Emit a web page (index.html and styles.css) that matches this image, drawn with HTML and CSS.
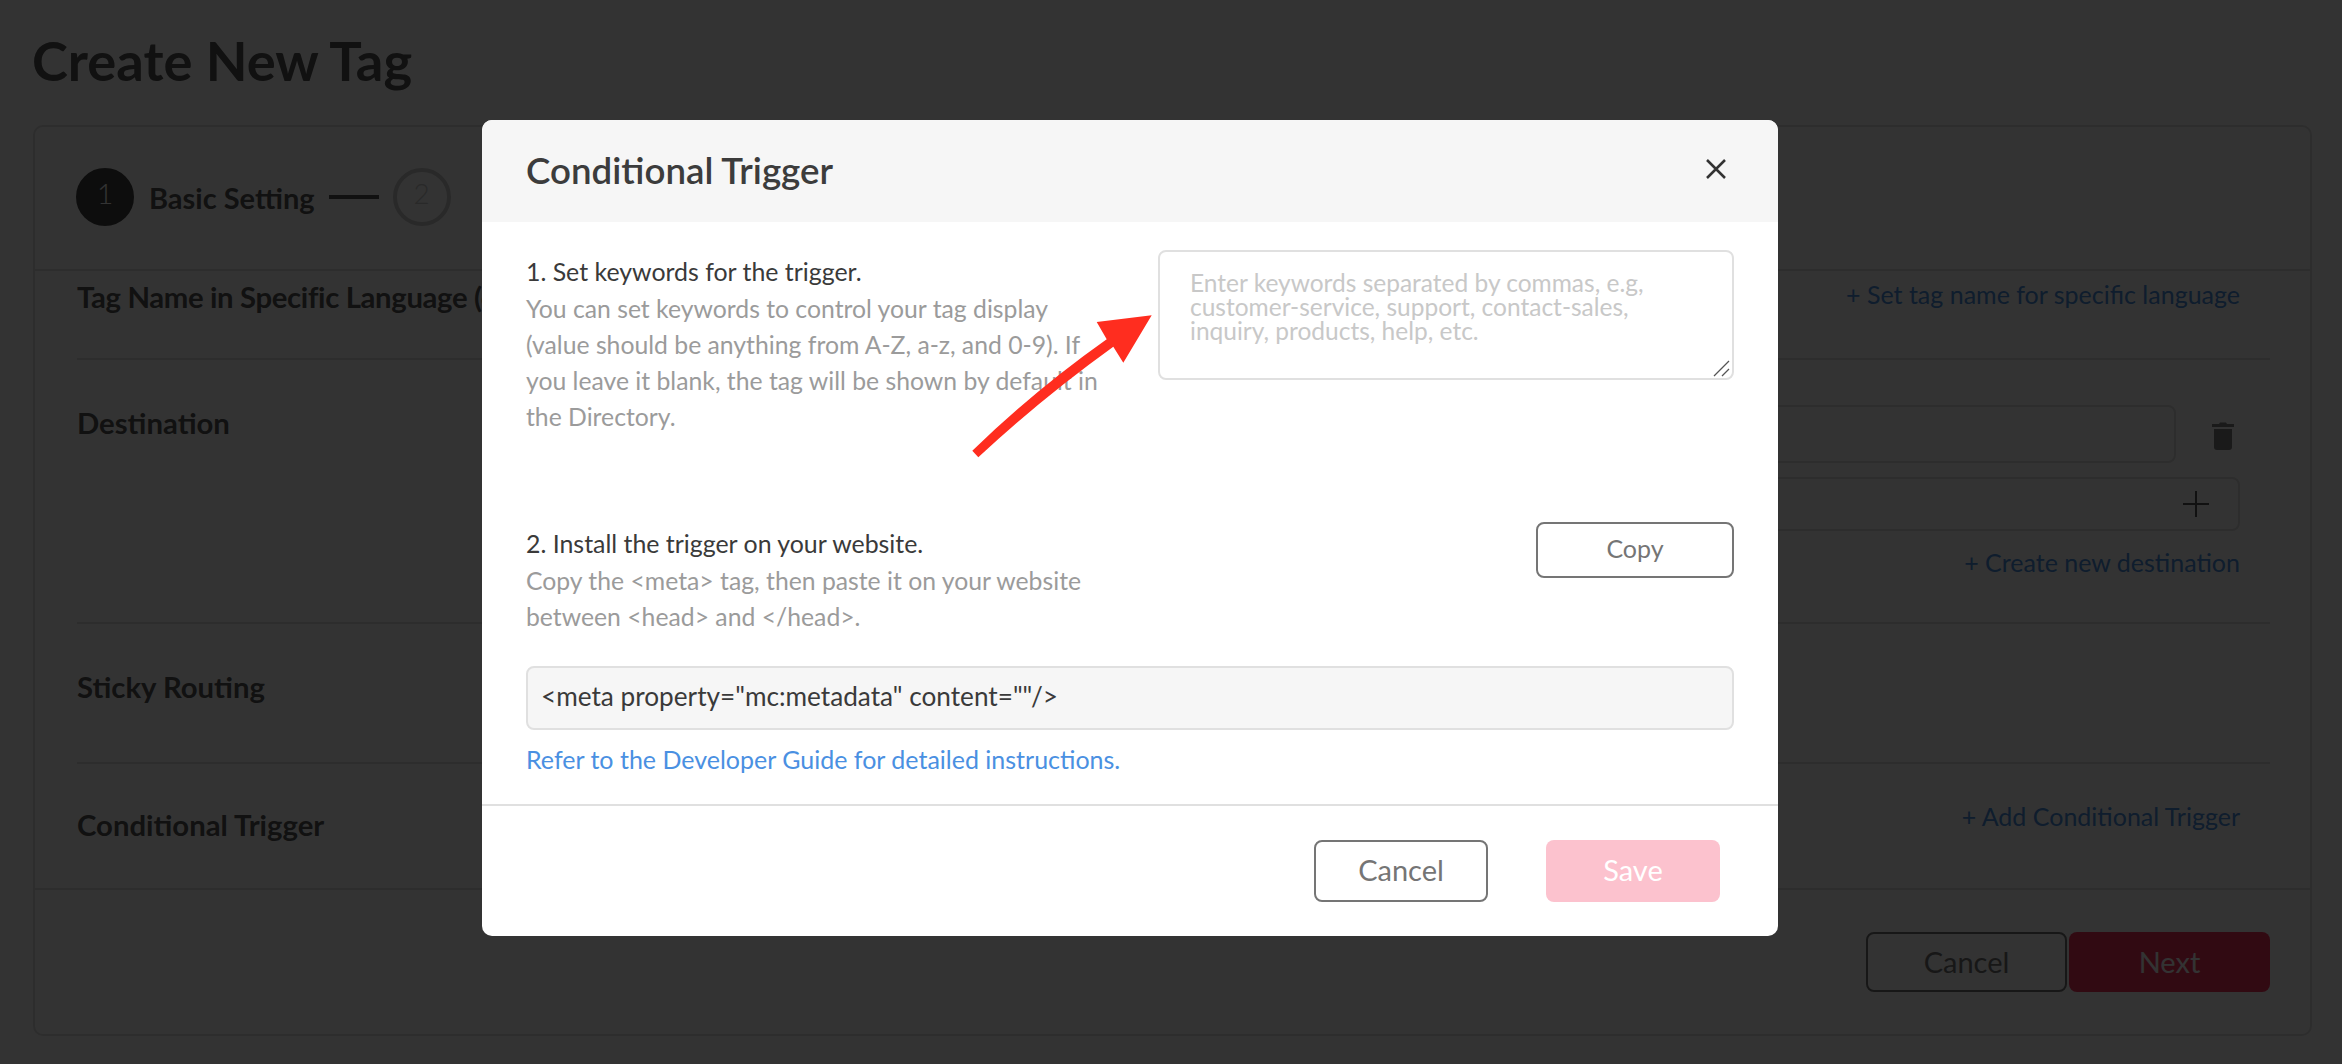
FILE: index.html
```html
<!DOCTYPE html>
<html lang="en">
<head>
    <meta charset="UTF-8">
    <title>Create New Tag</title>
    <link rel="stylesheet" href="styles.css">
</head>
<body>

<div class="page">
    <h1 class="page-title">Create New Tag</h1>

    <div class="card">
        <div class="stepper">
            <span class="step-num step-active">1</span>
            <span class="step-label">Basic Setting</span>
            <span class="step-line"></span>
            <span class="step-num">2</span>
        </div>

        <div class="rows">
            <div class="row row-lang">
                <span class="row-label">Tag Name in Specific Language (optional)</span>
                <a href="#" class="row-link">+ Set tag name for specific language</a>
            </div>

            <div class="row row-dest">
                <span class="row-label">Destination</span>
                <div class="dest-fields">
                    <div class="dest-line">
                        <div class="dest-input"></div>
                        <svg class="trash" viewBox="0 0 22 28" width="22" height="28">
                            <path d="M7 2 L8 0.5 H14 L15 2 H22 V5 H0 V2 Z M2 7 H20 V25 Q20 28 17 28 H5 Q2 28 2 25 Z"/>
                        </svg>
                    </div>
                    <div class="dest-select">
                        <svg class="plus" viewBox="0 0 26 26" width="26" height="26">
                            <path d="M13 0 V26 M0 13 H26"/>
                        </svg>
                    </div>
                    <a href="#" class="row-link dest-link">+ Create new destination</a>
                </div>
            </div>

            <div class="row row-sticky">
                <span class="row-label">Sticky Routing</span>
            </div>

            <div class="row row-trigger">
                <span class="row-label">Conditional Trigger</span>
                <a href="#" class="row-link">+ Add Conditional Trigger</a>
            </div>
        </div>

        <div class="card-footer">
            <button class="btn btn-outline btn-wide">Cancel</button>
            <button class="btn btn-next btn-wide">Next</button>
        </div>
    </div>
</div>

<div class="overlay">
    <div class="modal">
        <div class="modal-head">
            <h2>Conditional Trigger</h2>
            <svg class="close" viewBox="0 0 20 20" width="20" height="20">
                <path d="M1 1 L19 19 M19 1 L1 19"/>
            </svg>
        </div>

        <div class="modal-body">
            <div class="trigger-step step-keywords">
                <div class="step-text">
                    <p class="step-title">1. Set keywords for the trigger.</p>
                    <p class="step-desc">You can set keywords to control your tag display (value should be anything from A-Z, a-z, and 0-9). If you leave it blank, the tag will be shown by default in the Directory.</p>
                </div>
                <div class="keywords-wrap">
                    <textarea class="keywords" placeholder="Enter keywords separated by commas, e.g, customer-service, support, contact-sales, inquiry, products, help, etc."></textarea>
                    <svg class="grip" viewBox="0 0 18 18" width="18" height="18">
                        <path d="M1 16 L16 1 M9 16 L16 9"/>
                    </svg>
                </div>
            </div>

            <div class="trigger-step step-install">
                <div class="step-text">
                    <p class="step-title">2. Install the trigger on your website.</p>
                    <p class="step-desc">Copy the &lt;meta&gt; tag, then paste it on your website between &lt;head&gt; and &lt;/head&gt;.</p>
                </div>
                <button class="btn btn-outline btn-copy">Copy</button>
            </div>

            <div class="meta-box">&lt;meta property="mc:metadata" content=""/&gt;</div>
            <a href="#" class="guide-link">Refer to the Developer Guide for detailed instructions.</a>
        </div>

        <div class="modal-foot">
            <button class="btn btn-outline btn-foot">Cancel</button>
            <button class="btn btn-save btn-foot">Save</button>
        </div>
    </div>
</div>

<!-- annotation on top of the screenshot -->
<svg class="arrow" viewBox="0 0 2342 1064" width="2342" height="1064">
    <path d="M972.3 450.7 Q1035 390 1106.7 339.3 L1096.7 322 L1151.7 315.3 L1123.3 362.7 L1113.3 346.7 Q1042 398 978.3 457.3 Z"/>
</svg>

</body>
</html>
```

FILE: styles.css
```css
* {
    box-sizing: border-box;
}
html, body {
    margin: 0;
    padding: 0;
    height: 1064px;
    overflow: hidden;
}
body {
    font-family: Lato, "Open Sans", sans-serif;
    background-color: #ffffff;
    color: #555555;
}
p {
    margin: 0;
}
a {
    text-decoration: none;
}

/* page behind the dialog */
.page {
    padding: 0 30px 0 33px;
}
.page-title {
    margin: 0 0 0 -1px;
    height: 125px;
    padding-top: 26px;
    font-size: 54.3px;
    line-height: 68px;
    font-weight: 700;
}
.card {
    height: 911px;
    border: 2px solid #e0e0e0;
    border-radius: 10px;
}
.stepper {
    display: flex;
    align-items: center;
    height: 144px;
    padding: 41px 0 43px 41px;
    border-bottom: 2px solid #e0e0e0;
}
.step-num {
    display: flex;
    justify-content: center;
    align-items: center;
    width: 58px;
    height: 58px;
    padding-bottom: 8px;
    border: 4px solid #cccccc;
    border-radius: 50%;
    font-size: 28px;
    font-weight: 300;
    color: #cccccc;
}
.step-active {
    background-color: #444444;
    border-color: #444444;
    color: #ffffff;
}
.step-label {
    margin-left: 15px;
    font-size: 29px;
    font-weight: 700;
}
.step-line {
    width: 50px;
    height: 4px;
    margin: 0 14px;
    background-color: #555555;
}
.rows {
    padding: 0 40px 0 42px;
}
.row {
    display: flex;
    justify-content: space-between;
    border-bottom: 2px solid #e0e0e0;
}
.row-label {
    font-size: 29.3px;
    line-height: 36px;
    font-weight: 700;
    white-space: nowrap;
}
.row-link {
    font-size: 25px;
    line-height: 36px;
    color: #4a90e2;
}
.row-lang {
    height: 89px;
    padding: 8px 30px 0 0;
}
.row-lang .row-label {
    letter-spacing: -0.35px;
}
.row-lang .row-link {
    margin-top: -3px;
}
.row-dest {
    height: 264px;
    padding: 45px 30px 0 0;
}
.row-sticky {
    height: 140px;
    padding-top: 45px;
}
.row-trigger {
    height: 124px;
    padding: 43px 30px 0 0;
    border-bottom: 0;
}
.row-trigger .row-link {
    margin-top: -9px;
}
.dest-fields {
    display: flex;
    flex-direction: column;
    align-items: flex-end;
    width: 900px;
}
.dest-line {
    display: flex;
    align-items: center;
    width: 100%;
}
.dest-input {
    flex: 1;
    height: 58px;
    border: 2px solid #e0e0e0;
    border-radius: 8px;
}
.trash {
    margin: 3px 6px 0 36px;
    fill: #808080;
}
.dest-select {
    display: flex;
    align-items: center;
    justify-content: flex-end;
    width: 100%;
    height: 54px;
    margin-top: 14px;
    padding-right: 29px;
    border: 2px solid #e0e0e0;
    border-radius: 8px;
}
.plus {
    stroke: #555555;
    stroke-width: 2;
    fill: none;
}
.dest-link {
    margin-top: 13px;
}
.card-footer {
    display: flex;
    justify-content: flex-end;
    gap: 2px;
    height: 146px;
    padding: 42px 40px 0 0;
    border-top: 2px solid #e0e0e0;
}

/* buttons */
.btn {
    font-family: inherit;
    font-size: 29px;
    border-radius: 8px;
    padding: 0 0 2px;
}
.btn-outline {
    background-color: #ffffff;
    border: 2px solid #757575;
    color: #757575;
}
.btn-wide {
    width: 201px;
    height: 60px;
}
.btn-next {
    background-color: #f5325c;
    border: 0;
    color: #ffffff;
}
.btn-foot {
    width: 174px;
    height: 62px;
    padding-bottom: 4px;
}
.btn-save {
    background-color: #fcc2ce;
    border: 0;
    color: #ffffff;
}
.btn-copy {
    width: 198px;
    height: 56px;
    padding-bottom: 4px;
    font-size: 25px;
}

/* dialog */
.overlay {
    position: fixed;
    top: 0;
    left: 0;
    right: 0;
    bottom: 0;
    padding: 120px 0 0 482px;
    background-color: rgba(0, 0, 0, 0.8);
}
.modal {
    width: 1296px;
    height: 816px;
    background-color: #ffffff;
    border-radius: 10px;
    overflow: hidden;
    color: #3a3a3a;
}
.modal-head {
    display: flex;
    justify-content: space-between;
    align-items: center;
    height: 102px;
    padding: 0 52px 2px 44px;
    background-color: #f6f6f6;
}
.modal-head h2 {
    margin: 0;
    font-size: 36.7px;
    font-weight: 600;
    color: #3c3c3c;
}
.close {
    margin-bottom: 2px;
    stroke: #333333;
    stroke-width: 2.5;
    fill: none;
}
.modal-body {
    height: 582px;
    padding: 28px 44px 0;
}
.trigger-step {
    display: flex;
    justify-content: space-between;
    align-items: flex-start;
}
.step-keywords {
    height: 272px;
}
.step-install {
    height: 144px;
}
.step-text {
    flex: none;
    width: 590px;
    padding-top: 3px;
}
.step-title {
    font-size: 24.9px;
    line-height: 36px;
    margin-bottom: 2px;
}
.step-desc {
    font-size: 24.75px;
    line-height: 36px;
    color: #9b9b9b;
}
.keywords-wrap {
    position: relative;
    flex: none;
    width: 576px;
    height: 130px;
}
.keywords {
    display: block;
    width: 100%;
    height: 100%;
    padding: 19px 30px;
    border: 2px solid #e0e0e0;
    border-radius: 8px;
    font-family: inherit;
    font-size: 24.5px;
    line-height: 24px;
    color: #333333;
    resize: none;
}
.keywords::placeholder {
    color: #c8c8c8;
}
.grip {
    position: absolute;
    right: 3px;
    bottom: 2px;
    stroke: #555555;
    stroke-width: 1.3;
    fill: none;
}
.meta-box {
    height: 64px;
    padding: 0 13px;
    border: 2px solid #e0e0e0;
    border-radius: 8px;
    background-color: #f6f6f6;
    font-size: 26.2px;
    line-height: 57px;
}
.guide-link {
    display: block;
    margin-top: 11px;
    font-size: 25px;
    line-height: 36px;
    color: #4a90e2;
}
.modal-foot {
    display: flex;
    justify-content: flex-end;
    gap: 58px;
    height: 132px;
    padding: 34px 58px 0 0;
    border-top: 2px solid #e0e0e0;
}

/* red annotation arrow */
.arrow {
    position: fixed;
    top: 0;
    left: 0;
    fill: #ff2d1f;
}
```
